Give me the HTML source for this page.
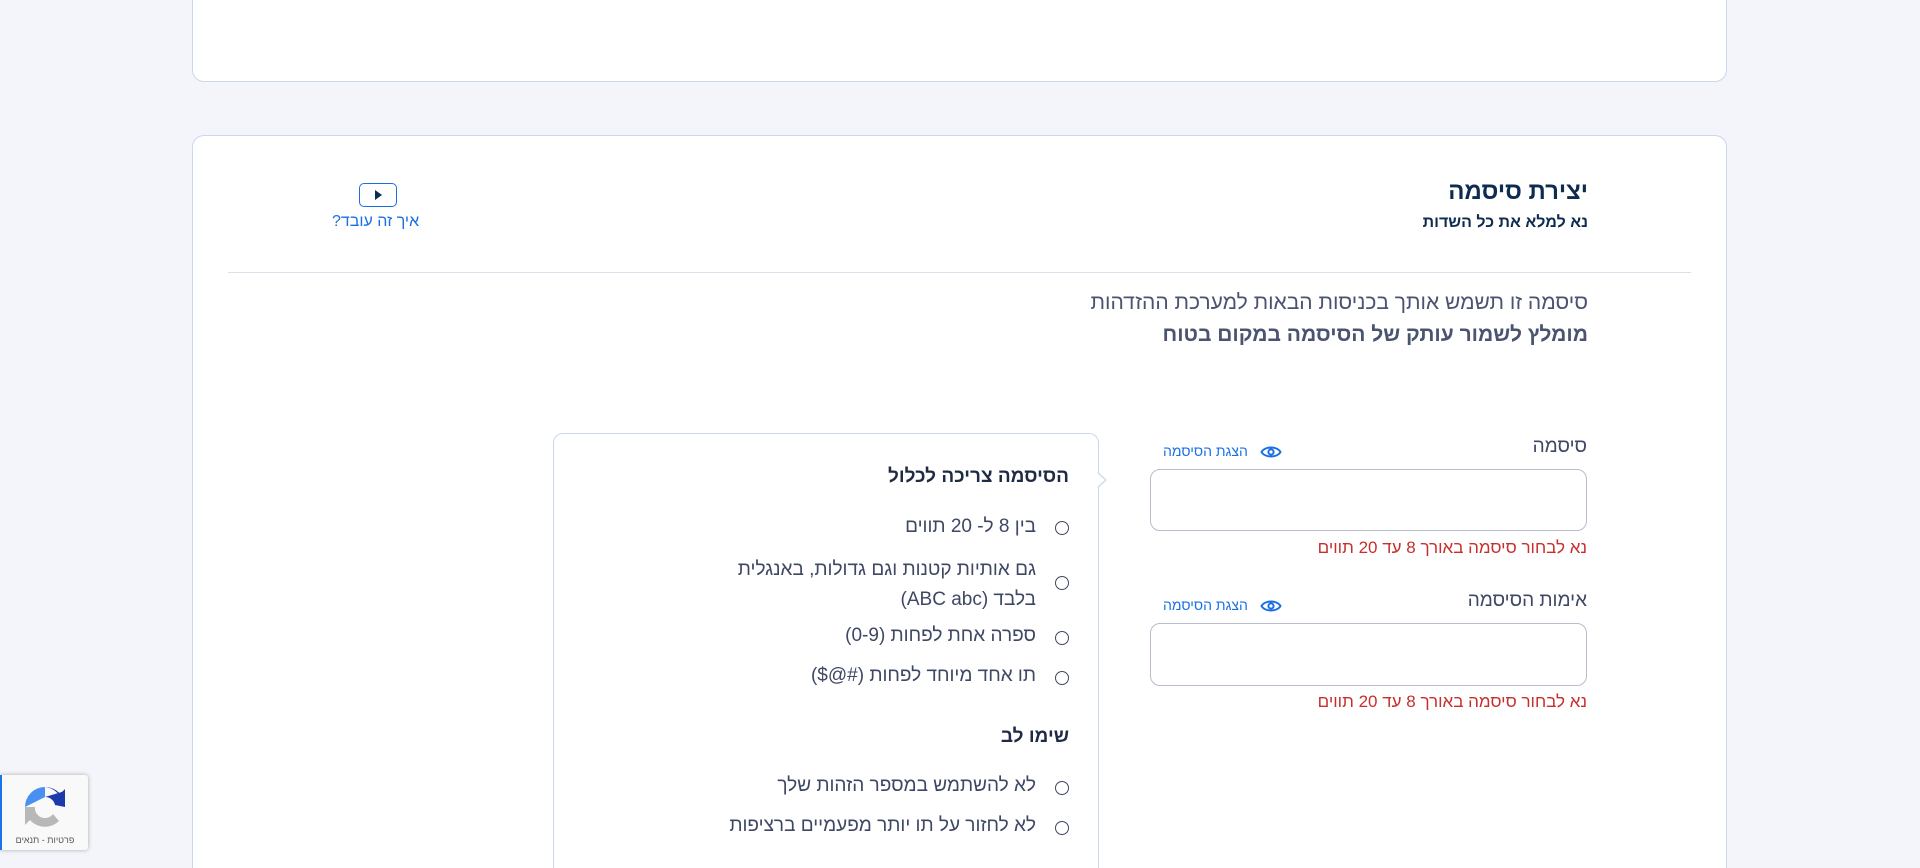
<!DOCTYPE html>
<html lang="he" dir="rtl" style="width:1920px;height:868px;overflow:hidden"><head><meta charset="utf-8"><style>
*{box-sizing:border-box;margin:0;padding:0}
body{width:1920px;height:868px;overflow:hidden;background:#f3f5fa;font-family:"Liberation Sans","Noto Sans CJK SC",sans-serif;position:relative;color:#3e4763}
.card{position:absolute;left:192px;width:1535px;background:#fff;border:1px solid #cbd7ec;border-radius:12px}
.a{position:absolute;white-space:nowrap}
.circ{position:absolute;width:14px;height:14px;border:1.5px solid #3e4763;border-radius:50%}
.inp{position:absolute;left:1150px;width:437px;border:1px solid #b9bccb;border-radius:10px;background:#fff}
.err{color:#c62f2b;font-size:17px}
.show{color:#1a6fe6;font-size:14px}
</style></head><body>
<div class="card" style="top:-20px;height:102px"></div>
<div class="card" style="top:135px;height:733px;border-bottom:none;border-radius:12px 12px 0 0"></div>

<div class="a" style="right:332px;top:178px;font-size:24px;font-weight:bold;color:#0e2b50">יצירת סיסמה</div>
<div class="a" style="right:332px;top:214px;font-size:16px;font-weight:bold;color:#0e2b50">נא למלא את כל השדות</div>

<div class="a" style="left:359px;top:183px;width:38px;height:24px;border:1.5px solid #1a6fe6;border-radius:5px"><svg width="36" height="22" viewBox="0 0 36 22" style="position:absolute;left:0;top:0"><path d="M15 6 L22 11 L15 16Z" fill="#0e2b50"/></svg></div>
<div class="a" style="left:332px;top:213px;font-size:16px;color:#1a6fe6">איך זה עובד?</div>

<div class="a" style="left:228px;top:272px;width:1463px;height:1px;background:#d9e0ec"></div>

<div class="a" style="right:332px;top:291px;font-size:21px;color:#4a5470">סיסמה זו תשמש אותך בכניסות הבאות למערכת ההזדהות</div>
<div class="a" style="right:332px;top:323px;font-size:21px;font-weight:bold;color:#4a5470">מומלץ לשמור עותק של הסיסמה במקום בטוח</div>

<div class="a" style="left:553px;top:433px;width:546px;height:435px;border:1px solid #cbd7ec;border-bottom:none;border-radius:10px 10px 0 0;background:#fff"></div>
<svg class="a" style="left:1097px;top:472px" width="12" height="16"><path d="M1 1 L9 8 L1 15" fill="#fff" stroke="#cbd7ec" stroke-width="1.2"/></svg>

<div class="a" style="right:851px;top:466px;font-size:19px;font-weight:bold;color:#1f2a44">הסיסמה צריכה לכלול</div>
<div class="circ" style="left:1055px;top:521px"></div>
<div class="a" style="right:884px;top:516px;font-size:19px">בין 8 ל- 20 תווים</div>
<div class="circ" style="left:1055px;top:576px"></div>
<div class="a" style="right:884px;top:555px;font-size:19px;line-height:30px;text-align:right">גם אותיות קטנות וגם גדולות, באנגלית<br>בלבד (ABC abc)</div>
<div class="circ" style="left:1055px;top:631px"></div>
<div class="a" style="right:884px;top:625px;font-size:19px">ספרה אחת לפחות (0-9)</div>
<div class="circ" style="left:1055px;top:671px"></div>
<div class="a" style="right:884px;top:665px;font-size:19px">תו אחד מיוחד לפחות (#@$)</div>
<div class="a" style="right:851px;top:726px;font-size:19px;font-weight:bold;color:#1f2a44">שימו לב</div>
<div class="circ" style="left:1055px;top:781px"></div>
<div class="a" style="right:884px;top:775px;font-size:19px">לא להשתמש במספר הזהות שלך</div>
<div class="circ" style="left:1055px;top:821px"></div>
<div class="a" style="right:884px;top:815px;font-size:19px">לא לחזור על תו יותר מפעמיים ברציפות</div>

<div class="a" style="right:333px;top:436px;font-size:19px;color:#3e4763">סיסמה</div>
<div class="a show" style="left:1163px;top:443px">הצגת הסיסמה</div>
<svg class="a" style="left:1260px;top:444px" width="22" height="16" viewBox="0 0 22 16"><path d="M1.5 8 C5 2 17 2 20.5 8 C17 14 5 14 1.5 8Z" fill="none" stroke="#1a6fe6" stroke-width="2"/><circle cx="11" cy="8" r="2.6" fill="none" stroke="#1a6fe6" stroke-width="2"/></svg>
<div class="inp" style="top:469px;height:62px"></div>
<div class="a err" style="right:333px;top:538px">נא לבחור סיסמה באורך 8 עד 20 תווים</div>

<div class="a" style="right:333px;top:590px;font-size:19px;color:#3e4763">אימות הסיסמה</div>
<div class="a show" style="left:1163px;top:597px">הצגת הסיסמה</div>
<svg class="a" style="left:1260px;top:598px" width="22" height="16" viewBox="0 0 22 16"><path d="M1.5 8 C5 2 17 2 20.5 8 C17 14 5 14 1.5 8Z" fill="none" stroke="#1a6fe6" stroke-width="2"/><circle cx="11" cy="8" r="2.6" fill="none" stroke="#1a6fe6" stroke-width="2"/></svg>
<div class="inp" style="top:623px;height:63px"></div>
<div class="a err" style="right:333px;top:692px">נא לבחור סיסמה באורך 8 עד 20 תווים</div>

<div class="a" style="left:0;top:775px;width:88px;height:75px;background:#f9f9f9;border-left:2px solid #1a73e8;border-radius:0 3px 3px 0;box-shadow:0 0 4px rgba(0,0,0,.3)">
<svg style="position:absolute;left:19px;top:8px" width="48" height="48" viewBox="0 0 48 48"><path d="M24 4 A20 20 0 0 1 44 24 L44 6 L38 12 A20 20 0 0 0 24 4Z" fill="#1c3aa9"/><path d="M24 4 L24 14 L16 18 L4 24 A20 20 0 0 1 24 4Z" fill="#4a90f2"/><path d="M4 24 L14 24 A10 10 0 0 0 32 31 L38 38 A20 20 0 0 1 4 24Z" fill="#b8b8b8"/><path d="M4 24 L4 42 L10 36 Z" fill="#b8b8b8"/><path d="M24 14 A10 10 0 0 1 34 22 L44 24 L44 8 Z" fill="#1c3aa9"/></svg>
<div style="position:absolute;left:0;width:86px;top:60px;text-align:center;font-size:9px;color:#555">פרטיות - תנאים</div>
</div>
</body></html>
